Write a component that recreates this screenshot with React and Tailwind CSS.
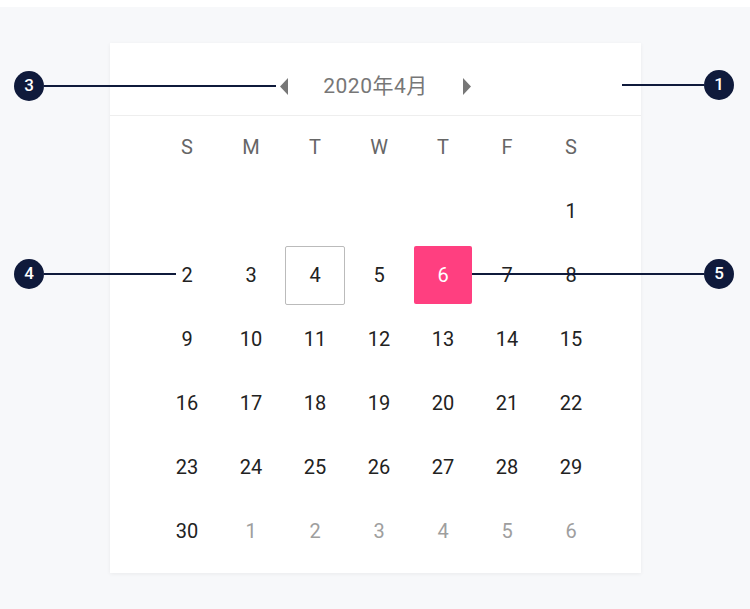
import React from "react";

const weekdays = ["S", "M", "T", "W", "T", "F", "S"];
const cells = [
  null, null, null, null, null, null, { d: 1 },
  { d: 2 }, { d: 3 }, { d: 4, today: true }, { d: 5 }, { d: 6, sel: true }, { d: 7 }, { d: 8 },
  { d: 9 }, { d: 10 }, { d: 11 }, { d: 12 }, { d: 13 }, { d: 14 }, { d: 15 },
  { d: 16 }, { d: 17 }, { d: 18 }, { d: 19 }, { d: 20 }, { d: 21 }, { d: 22 },
  { d: 23 }, { d: 24 }, { d: 25 }, { d: 26 }, { d: 27 }, { d: 28 }, { d: 29 },
  { d: 30 }, { d: 1, o: true }, { d: 2, o: true }, { d: 3, o: true }, { d: 4, o: true }, { d: 5, o: true }, { d: 6, o: true },
];

function Badge({ n }) {
  return (
    <div className="w-[30px] h-[30px] shrink-0 rounded-full bg-[#0f1a3b] text-white text-[17px] font-medium flex items-center justify-center">
      {n}
    </div>
  );
}

function Line({ w }) {
  return <div className={"h-[2px] bg-[#0f1a3b] " + w} />;
}

export default function App() {
  return (
    <div className="relative w-[750px] h-[609px] bg-[#f7f8fa] font-['Roboto','Noto_Sans_CJK_SC',sans-serif] overflow-hidden">
      <div className="h-[7px] bg-white" />
      <div className="pt-[36px] pl-[110px]">
        <div className="w-[531px] h-[530px] bg-white shadow-[0_1px_4px_rgba(0,0,0,0.06)]">
          <div className="h-[73px] pt-[14px] border-b border-[#eeeeee] flex items-center justify-center gap-[35px]">
            <svg width="8" height="17" viewBox="0 0 8 17" className="mt-[1px]">
              <polygon points="8,0 8,17 0,8.5" fill="#777777" />
            </svg>
            <span className="text-[21px] tracking-[0.5px] text-[#777777] font-['Roboto','Noto_Sans_CJK_SC',sans-serif] leading-none">
              2020年4月
            </span>
            <svg width="8" height="17" viewBox="0 0 8 17" className="mt-[1px]">
              <polygon points="0,0 0,17 8,8.5" fill="#777777" />
            </svg>
          </div>
          <div className="grid grid-cols-[repeat(7,64px)] pl-[45px] -mt-[1px]">
            {weekdays.map((w, i) => (
              <div key={"w" + i} className="h-16 flex items-center justify-center text-[20px] text-[#666666]">
                {w}
              </div>
            ))}
            {cells.map((c, i) => (
              <div key={i} className="h-16 flex items-center justify-center">
                {c &&
                  (c.today ? (
                    <div className="w-[60px] h-[59px] border border-[#bbbbbb] rounded-[2px] flex items-center justify-center text-[20px] text-[#222222]">
                      {c.d}
                    </div>
                  ) : c.sel ? (
                    <div className="w-[58px] h-[58px] bg-[#ff3f80] rounded-[2px] flex items-center justify-center text-[20px] text-white">
                      {c.d}
                    </div>
                  ) : (
                    <span className={"text-[20px] " + (c.o ? "text-[#9e9e9e]" : "text-[#222222]")}>{c.d}</span>
                  ))}
              </div>
            ))}
          </div>
        </div>
      </div>

      {/* annotations */}
      <div className="absolute left-[14px] top-[71px] flex items-center">
        <Badge n="3" />
        <Line w="w-[232px]" />
      </div>
      <div className="absolute left-[622px] top-[70px] flex items-center">
        <Line w="w-[82px]" />
        <Badge n="1" />
      </div>
      <div className="absolute left-[14px] top-[259px] flex items-center">
        <Badge n="4" />
        <Line w="w-[132px]" />
      </div>
      <div className="absolute left-[472px] top-[259px] flex items-center">
        <Line w="w-[232px]" />
        <Badge n="5" />
      </div>
    </div>
  );
}
